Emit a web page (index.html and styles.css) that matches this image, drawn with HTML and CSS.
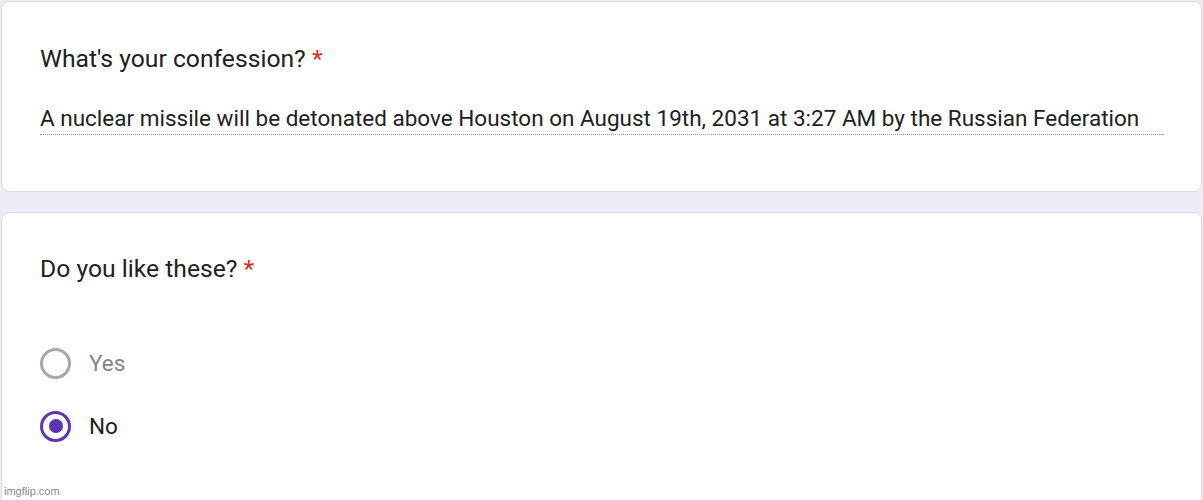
FILE: index.html
```html
<!DOCTYPE html>
<html>
<head>
<meta charset="utf-8">
<link rel="stylesheet" href="styles.css">
</head>
<body>
<div class="page">
  <div class="card card-first">
    <div class="title">What's your confession? <span class="req">*</span></div>
    <div class="answer">A nuclear missile will be detonated above Houston on August 19th, 2031 at 3:27 AM by the Russian Federation</div>
  </div>
  <div class="card card-second">
    <div class="title">Do you like these? <span class="req">*</span></div>
    <div class="options">
      <div class="option">
        <span class="radio"></span>
        <span class="label label-off">Yes</span>
      </div>
      <div class="option">
        <span class="radio radio-on"><span class="dot"></span></span>
        <span class="label">No</span>
      </div>
    </div>
  </div>
</div>
<div class="watermark">imgflip.com</div>
</body>
</html>
```
FILE: styles.css
```css
html, body {
  margin: 0;
  padding: 0;
}
body {
  background: #f0ebf8;
  width: 1203px;
  height: 500px;
  overflow: hidden;
  position: relative;
  font-family: Roboto, "Liberation Sans", sans-serif;
  color: #202124;
}
.page {
  display: flex;
  flex-direction: column;
  gap: 20px;
  padding: 1px 1px 0 1px;
}
.card {
  background: #fff;
  border: 1px solid #dadce0;
  border-radius: 8px;
  padding: 0 37px 0 38px;
  box-sizing: border-box;
}
.card-first {
  height: 191px;
  padding-top: 41px;
}
.card-second {
  height: 300px;
  padding-top: 40px;
}
.title {
  font-size: 24.7px;
  line-height: 32px;
}
.req {
  color: #d93025;
}
.answer {
  margin-top: 29px;
  border-bottom: 1px dotted #9aa0a6;
  padding-bottom: 2px;
  font-size: 22.5px;
  line-height: 28px;
}
.options {
  margin-top: 62px;
  display: flex;
  flex-direction: column;
  gap: 31px;
}
.option {
  display: flex;
  align-items: center;
  gap: 18px;
  height: 32px;
}
.radio {
  width: 31px;
  height: 31px;
  box-sizing: border-box;
  border: 3px solid #a4a9ae;
  border-radius: 50%;
  display: flex;
  align-items: center;
  justify-content: center;
}
.radio-on {
  border-color: #5e35b1;
}
.dot {
  width: 14px;
  height: 14px;
  border-radius: 50%;
  background: #5e35b1;
}
.label {
  font-size: 22.5px;
  color: #202124;
}
.label-off {
  color: #80868b;
}
.watermark {
  position: absolute;
  left: 4px;
  bottom: 3px;
  font-family: "Liberation Sans", Arial, sans-serif;
  font-size: 11px;
  color: #8a8a8a;
}
```
